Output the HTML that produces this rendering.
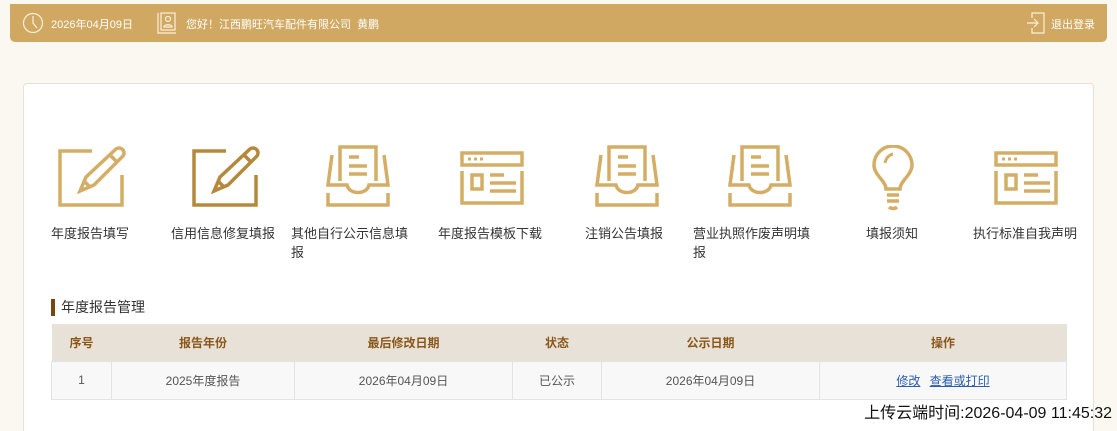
<!DOCTYPE html>
<html><head><meta charset="utf-8">
<style>
*{margin:0;padding:0;box-sizing:border-box}
html,body{width:1117px;height:431px;overflow:hidden}
body{background:#fbf8f1;font-family:"Liberation Sans","Noto Sans CJK SC",sans-serif;position:relative}
.hdr{position:absolute;left:10px;top:4px;width:1097px;height:38px;background:#d1a862;border-radius:0 0 5px 5px;color:#fff;font-size:11px}
.hdr span{position:absolute;top:12px}
.card{position:absolute;left:23px;top:83px;width:1071px;height:348px;background:#fff;border:1px solid #e6e1d8;border-bottom:none;border-radius:4px 4px 0 0}
.ic{position:absolute;top:145px}
.lb{position:absolute;top:224px;font-size:13px;color:#333;line-height:19px}
.tt{position:absolute;left:51px;top:299px;font-size:14px;color:#333;border-left:4px solid #7b4510;padding-left:6px;line-height:17px}
table{position:absolute;left:51px;top:324px;width:1016px;border-collapse:collapse;font-size:12px}
th{background:#e8e1d7;color:#8a5719;height:37px;font-weight:bold;border:none}
td{background:#f8f8f8;color:#555;height:38px;text-align:center;border:1px solid #e3e3e3}
td a{color:#2a5db0;text-decoration:underline;margin:0 3px}
.ft{position:absolute;right:5px;top:404px;font-size:16px;line-height:20px;color:#111}
</style></head><body>
<div class="hdr">
<svg style="position:absolute;left:12px;top:8px" width="22" height="22" viewBox="0 0 22 22" fill="none" stroke="#fbf0dc" stroke-width="1.2"><circle cx="11" cy="11" r="9.5"/><path d="M11 4v7l4 5"/></svg>
<span style="left:41px">2026年04月09日</span>
<svg style="position:absolute;left:147px;top:8px" width="20" height="22" viewBox="0 0 20 22" fill="none" stroke="#fbf0dc" stroke-width="1.2"><path d="M1 1v20h18"/><rect x="4" y="1" width="14" height="17"/><circle cx="11" cy="7" r="2.5"/><path d="M7 15c0-3 8-3 8 0z"/></svg>
<span style="left:176px">您好！江西鹏旺汽车配件有限公司&nbsp;&nbsp;黄鹏</span>
<svg style="position:absolute;left:1016px;top:8px" width="20" height="22" viewBox="0 0 20 22" fill="none" stroke="#fbf0dc" stroke-width="1.2"><path d="M6 6V1h12v20H6v-5"/><path d="M1 11h11M8 7l4 4-4 4"/></svg>
<span style="left:1041px">退出登录</span>
</div>
<div class="card"></div>

<svg class="ic" style="left:58px" width="68" height="62" viewBox="0 0 68 62" fill="none" stroke="#d4ad66" stroke-width="3.5"><path d="M34 6H2v54h62V30"/><path d="M58 4a5 5 0 017 7L36 40l-14 6 6-14z"/><path d="M52 10l8 8M26 36l6 6"/></svg>
<svg class="ic" style="left:192px" width="68" height="62" viewBox="0 0 68 62" fill="none" stroke="#b5893b" stroke-width="3.5"><path d="M34 6H2v54h62V30"/><path d="M58 4a5 5 0 017 7L36 40l-14 6 6-14z"/><path d="M52 10l8 8M26 36l6 6"/></svg>

<svg class="ic" style="left:325px" width="66" height="62" viewBox="0 0 66 62" fill="none" stroke="#d4ad66" stroke-width="3.5"><path d="M15 36V2h36v34"/><path d="M24 12h10M24 21h18M24 29h18"/><path d="M7 10L3 40h19c2 10 20 10 22 0h19L59 10"/><path d="M3 48v12h60V48"/></svg>
<svg class="ic" style="left:594px" width="66" height="62" viewBox="0 0 66 62" fill="none" stroke="#d4ad66" stroke-width="3.5"><path d="M15 36V2h36v34"/><path d="M24 12h10M24 21h18M24 29h18"/><path d="M7 10L3 40h19c2 10 20 10 22 0h19L59 10"/><path d="M3 48v12h60V48"/></svg>
<svg class="ic" style="left:727px" width="66" height="62" viewBox="0 0 66 62" fill="none" stroke="#d4ad66" stroke-width="3.5"><path d="M15 36V2h36v34"/><path d="M24 12h10M24 21h18M24 29h18"/><path d="M7 10L3 40h19c2 10 20 10 22 0h19L59 10"/><path d="M3 48v12h60V48"/></svg>

<svg class="ic" style="left:460px" width="64" height="62" viewBox="0 0 64 62" fill="none" stroke="#d4ad66" stroke-width="3.5"><rect x="2" y="8" width="60" height="12"/><path d="M8 14h3M14 14h3M20 14h3" stroke-width="3"/><path d="M2 26v32h60V26"/><rect x="12" y="30" width="10" height="14"/><path d="M30 30h14M30 38h26M30 46h26"/></svg>
<svg class="ic" style="left:994px" width="64" height="62" viewBox="0 0 64 62" fill="none" stroke="#d4ad66" stroke-width="3.5"><rect x="2" y="8" width="60" height="12"/><path d="M8 14h3M14 14h3M20 14h3" stroke-width="3"/><path d="M2 26v32h60V26"/><rect x="12" y="30" width="10" height="14"/><path d="M30 30h14M30 38h26M30 46h26"/></svg>

<svg class="ic" style="left:872px" width="42" height="66" viewBox="0 0 42 66" fill="none" stroke="#d4ad66" stroke-width="3.5"><path d="M14 44c0-8-12-14-12-24a19 19 0 0138 0c0 10-12 16-12 24z"/><path d="M13 18c1-5 4-8 8-9" stroke-width="3"/><path d="M15 50h12M15 56h12M17 62c2 2 6 2 8 0"/></svg>

<div class="lb" style="left:51px">年度报告填写</div>
<div class="lb" style="left:171px">信用信息修复填报</div>
<div class="lb" style="left:291px;width:126px">其他自行公示信息填报</div>
<div class="lb" style="left:438px">年度报告模板下载</div>
<div class="lb" style="left:585px">注销公告填报</div>
<div class="lb" style="left:693px;width:126px">营业执照作废声明填报</div>
<div class="lb" style="left:866px">填报须知</div>
<div class="lb" style="left:973px">执行标准自我声明</div>

<div class="tt">年度报告管理</div>
<table>
<tr><th style="width:60px">序号</th><th style="width:183px">报告年份</th><th style="width:218px">最后修改日期</th><th style="width:89px">状态</th><th style="width:218px">公示日期</th><th>操作</th></tr>
<tr><td>1</td><td>2025年度报告</td><td>2026年04月09日</td><td>已公示</td><td>2026年04月09日</td><td><a>修改</a> <a>查看或打印</a></td></tr>
</table>
<div class="ft">上传云端时间:2026-04-09 11:45:32</div>
</body></html>
